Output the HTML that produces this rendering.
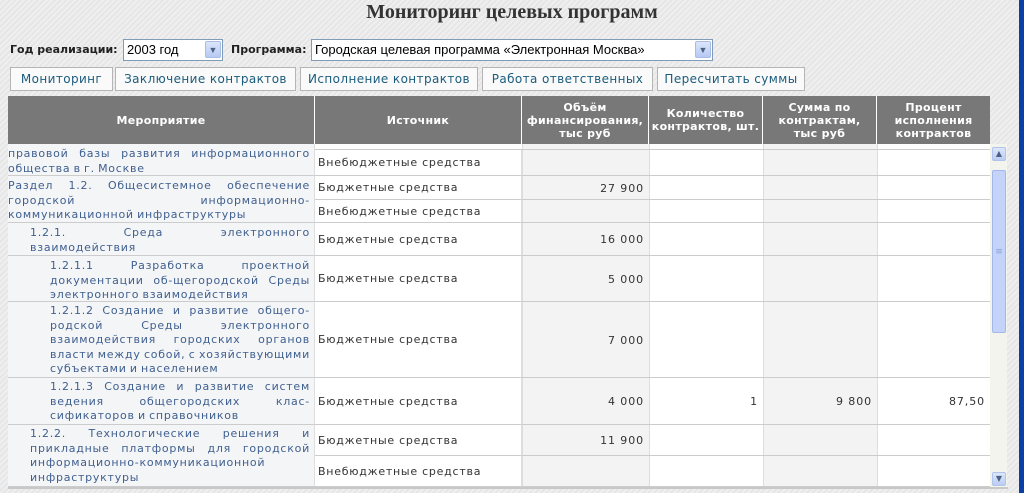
<!DOCTYPE html>
<html><head><meta charset="utf-8">
<style>
*{margin:0;padding:0;box-sizing:border-box}
body{width:1024px;height:493px;overflow:hidden;position:relative;font-family:"DejaVu Sans","Liberation Sans",sans-serif;font-size:11px;
background:repeating-linear-gradient(135deg,#efefef 0 2px,#e6e6e6 2px 4px);}
.a{position:absolute}
h1{position:absolute;left:0;width:1024px;top:1px;text-align:center;font:bold 20px "Liberation Serif",serif;color:#333}
.lbl{font-weight:bold;color:#222;font-size:11px}
.sel{background:#fff;border:1px solid #7f9db9;font-family:"Liberation Sans",sans-serif;font-size:13px;color:#000;padding:2px 3px;line-height:15px}
.arr{position:absolute;right:1px;top:1px;width:16px;height:17px;background:linear-gradient(#dbe6fb,#b5c9f3);border:1px solid #a8bde6;border-radius:2px;color:#4d6185;font-size:9px;text-align:center;line-height:16px}
.btn{background:#fafafa;border:1px solid #b5b5b5;color:#1b5c7c;font-size:12px;letter-spacing:0.4px;text-align:center;line-height:22px;height:24px;top:67px}
.hd{top:96px;height:48px;background:#787878;color:#fff;font-weight:bold;font-size:11px;letter-spacing:0.3px;display:flex;align-items:center;justify-content:center;text-align:center;line-height:13px;border-right:1px solid #fff}
.c{border-bottom:1px solid #ccc;border-right:1px solid #ddd}
.m{background:#f4f5f7;color:#3f5f8f;text-align:justify;line-height:14.5px;padding:3px 4px 0 0;letter-spacing:0.75px;word-spacing:-1px}
.s{background:#fff;color:#333;display:flex;align-items:center;padding-left:3px;letter-spacing:0.75px}
.v{background:#f3f3f3;color:#333;display:flex;align-items:center;justify-content:flex-end;padding-right:5px;letter-spacing:0.9px}
</style></head><body>
<h1>Мониторинг целевых программ</h1>
<div class="a lbl" style="left:10px;top:43px">Год реализации:</div>
<div class="a sel" style="left:123px;top:39px;width:100px;height:22px">2003 год<div class="arr">&#9660;</div></div>
<div class="a lbl" style="left:231px;top:43px">Программа:</div>
<div class="a sel" style="left:311px;top:39px;width:402px;height:22px">Городская целевая программа «Электронная Москва»<div class="arr">&#9660;</div></div>
<div class="a btn" style="left:10px;width:103px">Мониторинг</div>
<div class="a btn" style="left:115px;width:181px">Заключение контрактов</div>
<div class="a btn" style="left:300px;width:178px">Исполнение контрактов</div>
<div class="a btn" style="left:482px;width:171px">Работа ответственных</div>
<div class="a btn" style="left:657px;width:148px">Пересчитать суммы</div>

<div class="a hd" style="left:8px;width:307px">Мероприятие</div>
<div class="a hd" style="left:315px;width:207px">Источник</div>
<div class="a hd" style="left:522px;width:127px">Объём<br>финансирования,<br>тыс руб</div>
<div class="a hd" style="left:649px;width:114px">Количество<br>контрактов, шт.</div>
<div class="a hd" style="left:763px;width:114px">Сумма по<br>контрактам,<br>тыс руб</div>
<div class="a hd" style="left:877px;width:113px;border-right:none">Процент<br>исполнения<br>контрактов</div>

<div class="a" style="left:8px;top:144px;width:982px;height:343px;overflow:hidden;background:#fff">
<div class="a" style="left:0;top:0;width:307px;height:343px;background:#f4f5f7"></div>
<div class="a" style="left:514px;top:0;width:127px;height:343px;background:#f3f3f3;border-left:1px solid #ddd"></div>
<div class="a" style="left:641px;top:0;width:114px;height:343px;border-left:1px solid #ddd"></div>
<div class="a" style="left:755px;top:0;width:114px;height:343px;background:#f3f3f3;border-left:1px solid #ddd"></div>
<div class="a" style="left:869px;top:0;width:113px;height:343px;border-left:1px solid #ddd"></div>
<div class="a c m" style="left:0;top:-10px;width:307px;height:42px;padding-top:13px">правовой базы развития информационного общества в г. Москве</div>
<div class="a c m" style="left:0;top:32px;width:307px;height:47px">Раздел 1.2. Общесистемное обеспечение городской информационно-коммуникационной инфраструктуры</div>
<div class="a c m" style="left:0;top:79px;width:307px;height:33px;padding-left:22px">1.2.1. Среда электронного взаимодействия</div>
<div class="a c m" style="left:0;top:112px;width:307px;height:46px;padding-left:42px">1.2.1.1 Разработка проектной документации об-щегородской Среды электронного взаимодействия</div>
<div class="a c m" style="left:0;top:158px;width:307px;height:76px;padding-left:42px;padding-top:2px">1.2.1.2 Создание и развитие общего-родской Среды электронного взаимодействия городских органов власти между собой, с хозяйствующими субъектами и населением</div>
<div class="a c m" style="left:0;top:234px;width:307px;height:47px;padding-left:42px;padding-top:2px">1.2.1.3 Создание и развитие систем ведения общегородских клас-сификаторов и справочников</div>
<div class="a c m" style="left:0;top:281px;width:307px;height:62px;padding-left:22px;padding-top:2px">1.2.2. Технологические решения и прикладные платформы для городской информационно-коммуникационной инфраструктуры</div>
<div class="a" style="left:307px;top:0;width:675px;height:6px;border-bottom:1px solid #ccc"></div>
<div class="a s c" style="left:307px;top:6px;width:207px;height:26px">Внебюджетные средства</div>
<div class="a" style="left:514px;top:6px;width:468px;height:26px;border-bottom:1px solid #ccc"></div>
<div class="a s c" style="left:307px;top:32px;width:207px;height:24px">Бюджетные средства</div>
<div class="a" style="left:514px;top:32px;width:468px;height:24px;border-bottom:1px solid #ccc"></div>
<div class="a v" style="left:514px;top:32px;width:127px;height:24px;background:none">27 900</div>
<div class="a s c" style="left:307px;top:56px;width:207px;height:23px">Внебюджетные средства</div>
<div class="a" style="left:514px;top:56px;width:468px;height:23px;border-bottom:1px solid #ccc"></div>
<div class="a s c" style="left:307px;top:79px;width:207px;height:33px">Бюджетные средства</div>
<div class="a" style="left:514px;top:79px;width:468px;height:33px;border-bottom:1px solid #ccc"></div>
<div class="a v" style="left:514px;top:79px;width:127px;height:33px;background:none">16 000</div>
<div class="a s c" style="left:307px;top:112px;width:207px;height:46px">Бюджетные средства</div>
<div class="a" style="left:514px;top:112px;width:468px;height:46px;border-bottom:1px solid #ccc"></div>
<div class="a v" style="left:514px;top:112px;width:127px;height:46px;background:none">5 000</div>
<div class="a s c" style="left:307px;top:158px;width:207px;height:76px">Бюджетные средства</div>
<div class="a" style="left:514px;top:158px;width:468px;height:76px;border-bottom:1px solid #ccc"></div>
<div class="a v" style="left:514px;top:158px;width:127px;height:76px;background:none">7 000</div>
<div class="a s c" style="left:307px;top:234px;width:207px;height:47px">Бюджетные средства</div>
<div class="a" style="left:514px;top:234px;width:468px;height:47px;border-bottom:1px solid #ccc"></div>
<div class="a v" style="left:514px;top:234px;width:127px;height:47px;background:none">4 000</div>
<div class="a v" style="left:641px;top:234px;width:114px;height:47px;background:none">1</div>
<div class="a v" style="left:755px;top:234px;width:114px;height:47px;background:none">9 800</div>
<div class="a v" style="left:869px;top:234px;width:113px;height:47px;background:none">87,50</div>
<div class="a s c" style="left:307px;top:281px;width:207px;height:31px">Бюджетные средства</div>
<div class="a" style="left:514px;top:281px;width:468px;height:31px;border-bottom:1px solid #ccc"></div>
<div class="a v" style="left:514px;top:281px;width:127px;height:31px;background:none">11 900</div>
<div class="a s c" style="left:307px;top:312px;width:207px;height:31px">Внебюджетные средства</div>
<div class="a" style="left:514px;top:312px;width:468px;height:31px;border-bottom:1px solid #ccc"></div>
</div>
<div class="a" style="left:990px;top:144px;width:17px;height:343px;background:#f4f4ef"></div>
<div class="a" style="left:992px;top:147px;width:14px;height:14px;background:linear-gradient(#dde7fb,#bccdf3);border:1px solid #b0c3ea;border-radius:2px;color:#4d6185;font-size:8px;text-align:center;line-height:12px">&#9650;</div>
<div class="a" style="left:992px;top:170px;width:14px;height:163px;background:#c3d3fa;border:1px solid #a3b8e8;border-radius:2px;color:#8aa0d0;font-size:9px;text-align:center;line-height:163px">≡</div>
<div class="a" style="left:992px;top:472px;width:14px;height:14px;background:linear-gradient(#dde7fb,#bccdf3);border:1px solid #b0c3ea;border-radius:2px;color:#4d6185;font-size:8px;text-align:center;line-height:12px">&#9660;</div>
<div class="a" style="left:8px;top:487px;width:1000px;height:2px;background:#c8c8c8"></div>
<div class="a" style="left:1019px;top:0;width:5px;height:493px;background:#0b3fa8"></div>
</body></html>
